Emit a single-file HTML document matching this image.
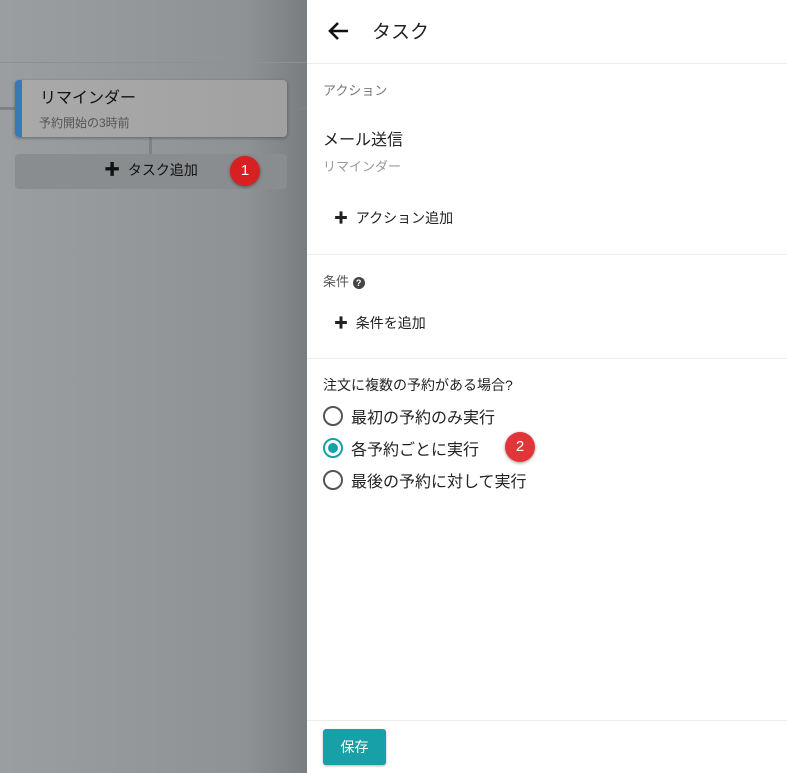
<!DOCTYPE html>
<html><head><meta charset="utf-8"><style>
*{box-sizing:border-box;margin:0;padding:0}
body{width:787px;height:773px;overflow:hidden;position:relative;font-family:"Liberation Sans","Noto Sans CJK JP",sans-serif;color:#222}
.left{position:absolute;left:0;top:0;width:307px;height:773px;background:linear-gradient(90deg,#9b9ea0 0%,#8f9294 80%,#7a7d7f 100%)}
.hl{position:absolute;left:0;top:62px;width:307px;height:1px;background:#8e9193}
.line{position:absolute;background:#7f8284}
.card{position:absolute;left:15px;top:80px;width:272px;height:57px;background:linear-gradient(90deg,#a9a9a9,#a1a1a1);border-radius:4px;border-left:7px solid #3a78bb;box-shadow:0 1px 3px rgba(0,0,0,.35)}
.card .t{position:absolute;left:18px;top:4px;font-size:16px;color:#111}
.card .s{position:absolute;left:17px;top:34px;font-size:12px;color:#555}
.add{position:absolute;left:15px;top:154px;width:272px;height:35px;background:#8a8d8f;border-radius:4px;font-size:14px;color:#111;text-align:center;line-height:33px}
.badge{position:absolute;width:30px;height:30px;border-radius:50%;background:#d81f22;color:#fff;font-size:15px;text-align:center;line-height:30px;box-shadow:0 1px 3px rgba(0,0,0,.4)}
.panel{position:absolute;left:307px;top:0;width:480px;height:773px;background:#fff}
.sep{position:absolute;left:0;width:480px;height:1px;background:#ececec}
.p{position:absolute;white-space:nowrap}
.radio{position:absolute;left:16px;width:20px;height:20px;border:2px solid #555;border-radius:50%}
.radio.on{border-color:#16a0a8}
.radio.on::after{content:"";position:absolute;left:3px;top:3px;width:10px;height:10px;border-radius:50%;background:#16a0a8}
.save{position:absolute;left:16px;top:729px;width:63px;height:36px;background:#17a0a8;color:#fff;border-radius:3px;font-size:14px;text-align:center;line-height:36px;box-shadow:0 1px 2px rgba(0,0,0,.3)}
</style></head><body>
<div class="left">
<div class="hl"></div>
<div class="line" style="left:0;top:107px;width:307px;height:3px"></div>
<div class="line" style="left:149px;top:137px;width:3px;height:17px"></div>
<div class="card"><div class="t">リマインダー</div><div class="s">予約開始の3時前</div></div>
<div class="add"><b style="font-size:16px">✚</b>&nbsp; タスク追加</div>
<div class="badge" style="left:230px;top:156px">1</div>
</div>
<div class="panel">
<svg style="position:absolute;left:20px;top:19px" width="24" height="24" viewBox="0 0 24 24"><path d="M21 12H4M11 4l-8 8 8 8" stroke="#111" stroke-width="2.6" fill="none"/></svg>
<div class="p" style="left:65px;top:17px;font-size:19px;color:#222">タスク</div>
<div class="sep" style="top:63px"></div>
<div class="p" style="left:16px;top:80px;font-size:13px;color:#777">アクション</div>
<div class="p" style="left:16px;top:126px;font-size:16px;color:#222">メール送信</div>
<div class="p" style="left:16px;top:156px;font-size:13px;color:#999">リマインダー</div>
<div class="p" style="left:27px;top:208px;font-size:14px;color:#222"><b>✚</b>&nbsp; アクション追加</div>
<div class="sep" style="top:254px"></div>
<div class="p" style="left:16px;top:271px;font-size:13px;color:#555">条件 <span style="display:inline-block;width:12px;height:12px;border-radius:50%;background:#444;color:#fff;font-size:9px;text-align:center;line-height:12px;font-weight:bold">?</span></div>
<div class="p" style="left:27px;top:313px;font-size:14px;color:#222"><b>✚</b>&nbsp; 条件を追加</div>
<div class="sep" style="top:358px"></div>
<div class="p" style="left:16px;top:375px;font-size:14px;color:#222">注文に複数の予約がある場合?</div>
<div class="radio" style="top:406px"></div>
<div class="p" style="left:44px;top:404px;font-size:16px">最初の予約のみ実行</div>
<div class="radio on" style="top:438px"></div>
<div class="p" style="left:44px;top:436px;font-size:16px">各予約ごとに実行</div>
<div class="badge" style="left:198px;top:432px;background:#e2353a">2</div>
<div class="radio" style="top:470px"></div>
<div class="p" style="left:44px;top:468px;font-size:16px">最後の予約に対して実行</div>
<div class="sep" style="top:720px"></div>
<div class="save">保存</div>
</div>
</body></html>
